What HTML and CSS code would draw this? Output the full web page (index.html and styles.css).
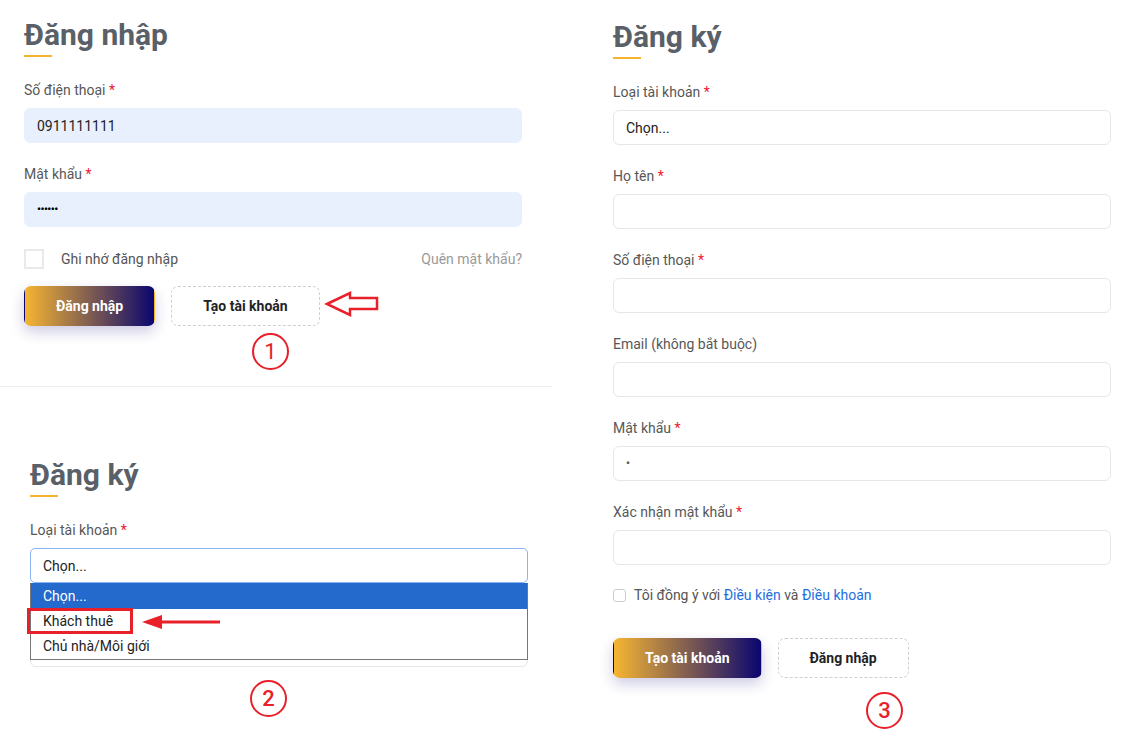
FILE: index.html
```html
<!DOCTYPE html>
<html lang="vi">
<head>
<meta charset="utf-8">
<title>Đăng nhập / Đăng ký</title>
<link rel="stylesheet" href="styles.css">
</head>
<body>
<div class="page">
  <div class="col-left">
    <section class="panel login">
      <h2 class="title">Đăng nhập</h2>
      <div class="field">
        <label class="label">Số điện thoại <span class="req">*</span></label>
        <input class="input autofill" type="text" value="0911111111">
      </div>
      <div class="field">
        <label class="label">Mật khẩu <span class="req">*</span></label>
        <input class="input autofill pw" type="password" value="123456">
      </div>
      <div class="remember">
        <label class="remember-left"><input class="check-sq" type="checkbox"><span>Ghi nhớ đăng nhập</span></label>
        <a class="forgot">Quên mật khẩu?</a>
      </div>
      <div class="actions">
        <button class="btn btn-primary">Đăng nhập</button>
        <button class="btn btn-outline">Tạo tài khoản</button>
      </div>
    </section>
    <div class="divider"></div>
    <section class="panel reg-mini">
      <h2 class="title">Đăng ký</h2>
      <div class="field">
        <label class="label">Loại tài khoản <span class="req">*</span></label>
        <div class="select-wrap">
          <select class="input focus"><option>Chọn...</option></select>
          <div class="listbox">
            <div class="opt active">Chọn...</div>
            <div class="opt">Khách thuê</div>
            <div class="opt">Chủ nhà/Môi giới</div>
          </div>
        </div>
      </div>
      <input class="input under-list" type="text" aria-label="Họ tên">
    </section>
  </div>

  <div class="col-right">
    <h2 class="title">Đăng ký</h2>
    <div class="field">
      <label class="label">Loại tài khoản <span class="req">*</span></label>
      <select class="input"><option>Chọn...</option></select>
    </div>
    <div class="field">
      <label class="label">Họ tên <span class="req">*</span></label>
      <input class="input" type="text">
    </div>
    <div class="field">
      <label class="label">Số điện thoại <span class="req">*</span></label>
      <input class="input" type="text">
    </div>
    <div class="field">
      <label class="label">Email (không bắt buộc)</label>
      <input class="input" type="text">
    </div>
    <div class="field">
      <label class="label">Mật khẩu <span class="req">*</span></label>
      <input class="input pw-one" type="password" value="1">
    </div>
    <div class="field">
      <label class="label">Xác nhận mật khẩu <span class="req">*</span></label>
      <input class="input" type="password">
    </div>
    <label class="agree"><input class="check-sm" type="checkbox"><span>Tôi đồng ý với <a class="link">Điều kiện</a> và <a class="link">Điều khoản</a></span></label>
    <div class="actions actions-right">
      <button class="btn btn-primary">Tạo tài khoản</button>
      <button class="btn btn-outline">Đăng nhập</button>
    </div>
  </div>

  <!-- annotations -->
  <svg class="ann ann-arrow1" width="56" height="28" viewBox="0 0 56 28"><polygon points="3,14 26,3 26,8 53,8 53,19 26,19 26,25" fill="none" stroke="#e8202a" stroke-width="2.5" stroke-linejoin="miter"/></svg>
  <div class="ann mark mark1">1</div>
  <div class="ann hl-box"></div>
  <svg class="ann ann-arrow2" width="82" height="18" viewBox="0 0 82 18"><line x1="20" y1="9" x2="80" y2="9" stroke="#e8202a" stroke-width="3"/><polygon points="2,9 22,2 22,16" fill="#e8202a"/></svg>
  <div class="ann mark mark2">2</div>
  <div class="ann mark mark3">3</div>
</div>
</body>
</html>
```

FILE: styles.css
```css
* { box-sizing: border-box; }
body {
  margin: 0;
  background: #fff;
  font-family: Roboto, "Noto Sans", "Liberation Sans", sans-serif;
  color: #333;
}
.page {
  position: relative;
  display: flex;
  width: 1133px;
  height: 735px;
  overflow: hidden;
}
.col-left { width: 552px; flex: none; }
.login { padding: 17px 30px 0 24px; }
.divider { height: 1px; background: #f0f0f0; margin-top: 60px; }
.reg-mini { padding: 70px 24px 0 30px; }
.col-right { width: 498px; flex: none; margin-left: 61px; padding-top: 19px; }

.title {
  margin: 0 0 23px;
  font-size: 30px;
  line-height: 36px;
  font-weight: 700;
  color: #596067;
}
.title::after {
  content: "";
  display: block;
  width: 28px;
  height: 2px;
  margin-top: 2px;
  background: #f6b42e;
}

.field + .field { margin-top: 21px; }
.label {
  display: block;
  font-size: 14px;
  line-height: 20px;
  color: #575757;
  margin-bottom: 8px;
}
.req { color: #f01432; }

.input {
  display: block;
  width: 100%;
  height: 35px;
  margin: 0;
  padding: 0 12px;
  border: 1px solid #e7e7e7;
  border-radius: 6px;
  background: #fff;
  font-family: Roboto, "Noto Sans", sans-serif;
  font-size: 14px;
  color: #222;
  outline: none;
  -webkit-appearance: none;
  appearance: none;
}
.input.autofill { background: #e8f0fe; border-color: #e8f0fe; }
.input.pw { font-size: 11px; font-weight: 700; letter-spacing: -0.5px; color: #000; }
.input.pw-one { font-size: 11px; font-weight: 700; color: #555; }
.input.focus { border-color: #8ab4f8; border-radius: 5px; }
.under-list { margin-top: 49px; }

.remember {
  margin-top: 22px;
  display: flex;
  align-items: center;
  justify-content: space-between;
  font-size: 14px;
  line-height: 20px;
}
.remember-left { display: flex; align-items: center; gap: 17px; color: #555; }
.check-sq {
  -webkit-appearance: none;
  appearance: none;
  width: 20px;
  height: 20px;
  margin: 0;
  border: 2px solid #e9e9e9;
  background: #fff;
}
.forgot { color: #9a9a9a; }

.actions { display: flex; gap: 16px; margin-top: 17px; }
.actions-right { margin-top: 33px; }
.btn {
  height: 40px;
  padding: 0 31px;
  border-radius: 7px;
  border: 1px solid transparent;
  font-family: Roboto, "Noto Sans", sans-serif;
  font-size: 14px;
  font-weight: 700;
  cursor: pointer;
}
.btn-primary {
  color: #fff;
  background: linear-gradient(90deg, #f6b532 0%, #0a066f 100%);
  box-shadow: 0 6px 14px rgba(30, 24, 130, 0.22);
}
.btn-outline {
  color: #1f2328;
  background: #fff;
  border: 1px dashed #cfcfcf;
}

.select-wrap { position: relative; }
.listbox {
  position: absolute;
  top: 35px;
  left: 0;
  right: 0;
  z-index: 2;
  background: #fff;
  border: 1px solid #767676;
  border-top: none;
}
.opt {
  height: 25px;
  line-height: 25px;
  padding-left: 12px;
  font-size: 14px;
  color: #222;
}
.opt.active { height: 26px; line-height: 26px; background: #2469cc; color: #fff; }

.agree {
  margin-top: 20px;
  display: flex;
  align-items: center;
  gap: 8px;
  font-size: 14px;
  line-height: 20px;
  color: #555;
}
.check-sm {
  -webkit-appearance: none;
  appearance: none;
  width: 13px;
  height: 13px;
  margin: 0;
  border: 1px solid #cdcdcd;
  border-radius: 3px;
  background: #fff;
}
.link { color: #1d6fe0; }

/* annotations */
.ann { position: absolute; z-index: 5; }
.ann-arrow1 { left: 324px; top: 290px; }
.ann-arrow2 { left: 140px; top: 613px; }
.hl-box {
  left: 27px;
  top: 608px;
  width: 106px;
  height: 26px;
  border: 3px solid #e8202a;
}
.mark {
  width: 37px;
  height: 37px;
  border: 2.5px solid #e8202a;
  border-radius: 50%;
  display: flex;
  align-items: center;
  justify-content: center;
  color: #e8202a;
  font-size: 22px;
  line-height: 1;
}
.mark1 { left: 252px; top: 333px; font-weight: 400; }
.mark2 { left: 250px; top: 680px; font-weight: 500; }
.mark3 { left: 866px; top: 692px; font-weight: 500; }
```
